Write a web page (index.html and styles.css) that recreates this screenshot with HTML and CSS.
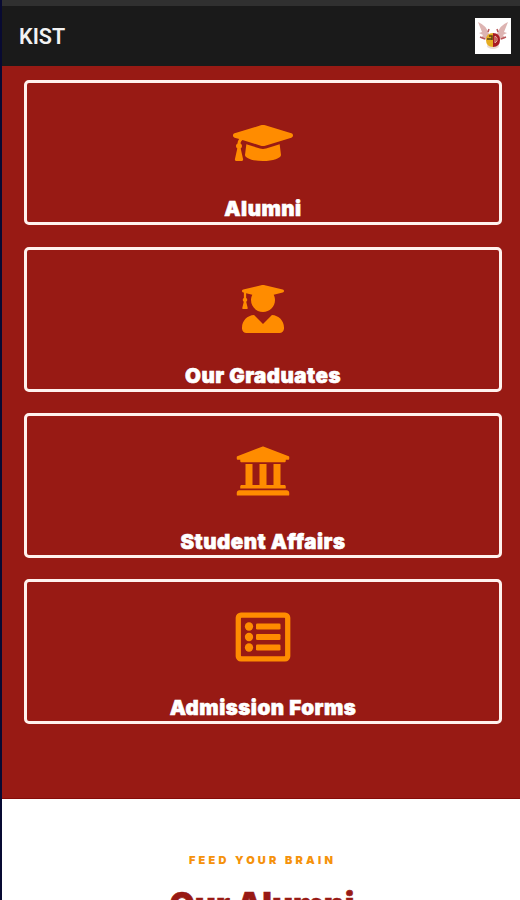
FILE: index.html
```html
<!DOCTYPE html>
<html lang="en">
<head>
<meta charset="utf-8">
<title>KIST</title>
<link rel="stylesheet" href="styles.css">
</head>
<body>
<div class="status"></div>
<header class="bar">
  <h1 class="title">KIST</h1>
  <svg class="logo" viewBox="0 0 36 36" aria-hidden="true">
    <rect width="36" height="36" fill="#fff"/>
    <g fill="#ddb4b2"><path d="M3 4Q11 7 14 16L12 22 6 20 8 17 4 15 7 14Z"/><path d="M33 4Q25 7 22 16L24 22 30 20 28 17 32 15 29 14Z"/></g>
    <path d="M5 19l5 2M31 19l-5 2M13 14l1-3M23 14l-1-3" stroke="#b8575a" stroke-width="1.5"/>
    <ellipse cx="18" cy="28" rx="6" ry="3" fill="#eadbd3"/>
    <path d="M18 15Q11 15 11 22T18 29Z" fill="#e5ad22"/>
    <path d="M18 15Q25 15 25 22T18 29Z" fill="#a91b23"/>
    <path d="M12 21h5M14 18h3v4" fill="none" stroke="#5c4313" stroke-width="1.5"/>
    <path d="M20 18q3 1 2 5l-2 2z" fill="none" stroke="#e7b0a0" stroke-width="1"/>
  </svg>
</header>
<main class="menu">
  <a class="card">
    <svg class="icon cap" viewBox="0 0 640 512"><path d="M622.34 153.2L343.4 67.5c-15.2-4.67-31.6-4.67-46.79 0L17.66 153.2c-23.54 7.23-23.54 38.36 0 45.59l48.63 14.94c-10.67 13.19-17.23 29.28-17.88 46.9C38.78 266.15 32 276.11 32 288c0 10.78 5.68 19.85 13.86 25.65L20.33 428.53C18.11 438.52 25.71 448 35.94 448h56.11c10.24 0 17.84-9.48 15.62-19.47L82.14 313.65C90.32 307.85 96 298.78 96 288c0-11.57-6.47-21.25-15.66-26.87.76-15.02 8.44-28.3 20.69-36.72L296.6 284.5c9.06 2.78 26.44 6.25 46.79 0l278.95-85.7c23.55-7.24 23.55-38.36 0-45.6zM352.79 315.09c-28.53 8.76-52.84 3.92-65.59 0l-145.02-44.55L128 384c0 35.35 85.96 64 192 64s192-28.65 192-64l-14.18-113.47-145.03 44.56z"/></svg>
    <span class="label">Alumni</span>
  </a>
  <a class="card">
    <svg class="icon grad" viewBox="0 0 448 512"><path d="M319.4 320.6L224 416l-95.4-95.4C57.1 323.7 0 382.2 0 454.4v9.6c0 26.5 21.5 48 48 48h352c26.5 0 48-21.5 48-48v-9.6c0-72.2-57.1-130.7-128.6-133.8zM13.6 79.8l6.4 1.5v58.4c-7 4.2-12 11.5-12 20.3 0 8.4 4.6 15.4 11.1 19.7L3.5 242c-1.7 6.9 2.1 14 7.6 14h41.8c5.5 0 9.3-7.1 7.6-14l-15.6-62.3C51.4 175.4 56 168.4 56 160c0-8.8-5-16.1-12-20.3V87.1l66 15.9c-8.6 17.2-14 36.4-14 57 0 70.7 57.3 128 128 128s128-57.3 128-128c0-20.6-5.3-39.8-14-57l96.3-23.2c18.2-4.4 18.2-27.1 0-31.5l-190.4-46c-13-3.1-26.7-3.1-39.7 0L13.6 48.2c-18.1 4.4-18.1 27.2 0 31.6z"/></svg>
    <span class="label">Our Graduates</span>
  </a>
  <a class="card">
    <svg class="icon wide" viewBox="0 0 512 512"><path d="M496 128v16a8 8 0 0 1-8 8h-24v12c0 6.627-5.373 12-12 12H60c-6.627 0-12-5.373-12-12v-12H24a8 8 0 0 1-8-8v-16a8 8 0 0 1 4.941-7.392l232-88a7.996 7.996 0 0 1 6.118 0l232 88A8 8 0 0 1 496 128zm-24 304H40c-13.255 0-24 10.745-24 24v16a8 8 0 0 0 8 8h464a8 8 0 0 0 8-8v-16c0-13.255-10.745-24-24-24zM96 192v192H60c-6.627 0-12 5.373-12 12v20h416v-20c0-6.627-5.373-12-12-12h-36V192h-64v192h-64V192h-64v192h-64V192H96z"/></svg>
    <span class="label">Student Affairs</span>
  </a>
  <a class="card">
    <svg class="icon wide" viewBox="0 0 512 512"><path fill-rule="evenodd" d="M54 32H458a48 48 0 0 1 48 48V432a48 48 0 0 1-48 48H54a48 48 0 0 1-48-48V80a48 48 0 0 1 48-48ZM60 80a6 6 0 0 0-6 6V426a6 6 0 0 0 6 6H452a6 6 0 0 0 6-6V86a6 6 0 0 0-6-6Z"/><circle cx="128" cy="160" r="38"/><circle cx="128" cy="256" r="38"/><circle cx="128" cy="352" r="38"/><rect x="192" y="132" width="224" height="56" rx="12"/><rect x="192" y="228" width="224" height="56" rx="12"/><rect x="192" y="324" width="224" height="56" rx="12"/></svg>
    <span class="label">Admission Forms</span>
  </a>
</main>
<section class="alumni">
  <p class="eyebrow">FEED YOUR BRAIN</p>
  <h2 class="heading">Our Alumni</h2>
</section>
</body>
</html>
```

FILE: styles.css
```css
* { box-sizing: border-box; }
body {
  margin: 0;
  height: 900px;
  overflow: hidden;
  border-left: 2px solid #080a32;
  background: #fff;
  font-family: Inter, "Liberation Sans", sans-serif;
}
.status { height: 6px; background: #303030; }
.bar {
  height: 60px;
  padding: 0 9px 0 17px;
  display: flex;
  align-items: center;
  justify-content: space-between;
  background: #1a1a1a;
}
.title {
  margin: 2px 0 0;
  color: #f2f2f2;
  font: 600 21.5px/30px Roboto, sans-serif;
}
.logo { width: 36px; height: 36px; }
.menu {
  height: 733px;
  padding: 14px 18px 0 22px;
  display: flex;
  flex-direction: column;
  gap: 21px;
  background: #981a14;
  border-bottom: 1px solid #850c09;
}
.card {
  flex: none;
  height: 145px;
  display: flex;
  flex-direction: column;
  align-items: center;
  justify-content: space-between;
  border: 3px solid #fff2ee;
  border-radius: 5px;
}
.card:nth-child(2) { margin-top: 1px; }
.icon { display: block; fill: #ff8c00; }
.cap { width: 60px; height: 48px; margin-top: 36px; }
.grad { width: 42px; height: 48px; margin-top: 35px; }
.wide { width: 56px; height: 56px; margin-top: 27px; }
.label {
  padding-bottom: 1px;
  color: #fff;
  font-size: 20.5px;
  font-weight: 900;
  line-height: 24px;
  letter-spacing: 0.5px;
  white-space: nowrap;
  -webkit-text-stroke: 0.6px #fff;
}
.alumni { padding-top: 51px; text-align: center; }
.eyebrow {
  margin: 0;
  padding-left: 3px;
  color: #f5920b;
  font-size: 11px;
  font-weight: 900;
  line-height: 20px;
  letter-spacing: 3.2px;
}
.heading {
  margin: 15px 0 0;
  padding-left: 2px;
  color: #981a14;
  font-size: 32.5px;
  font-weight: 900;
  line-height: 40px;
  -webkit-text-stroke: 0.6px #981a14;
}
```
